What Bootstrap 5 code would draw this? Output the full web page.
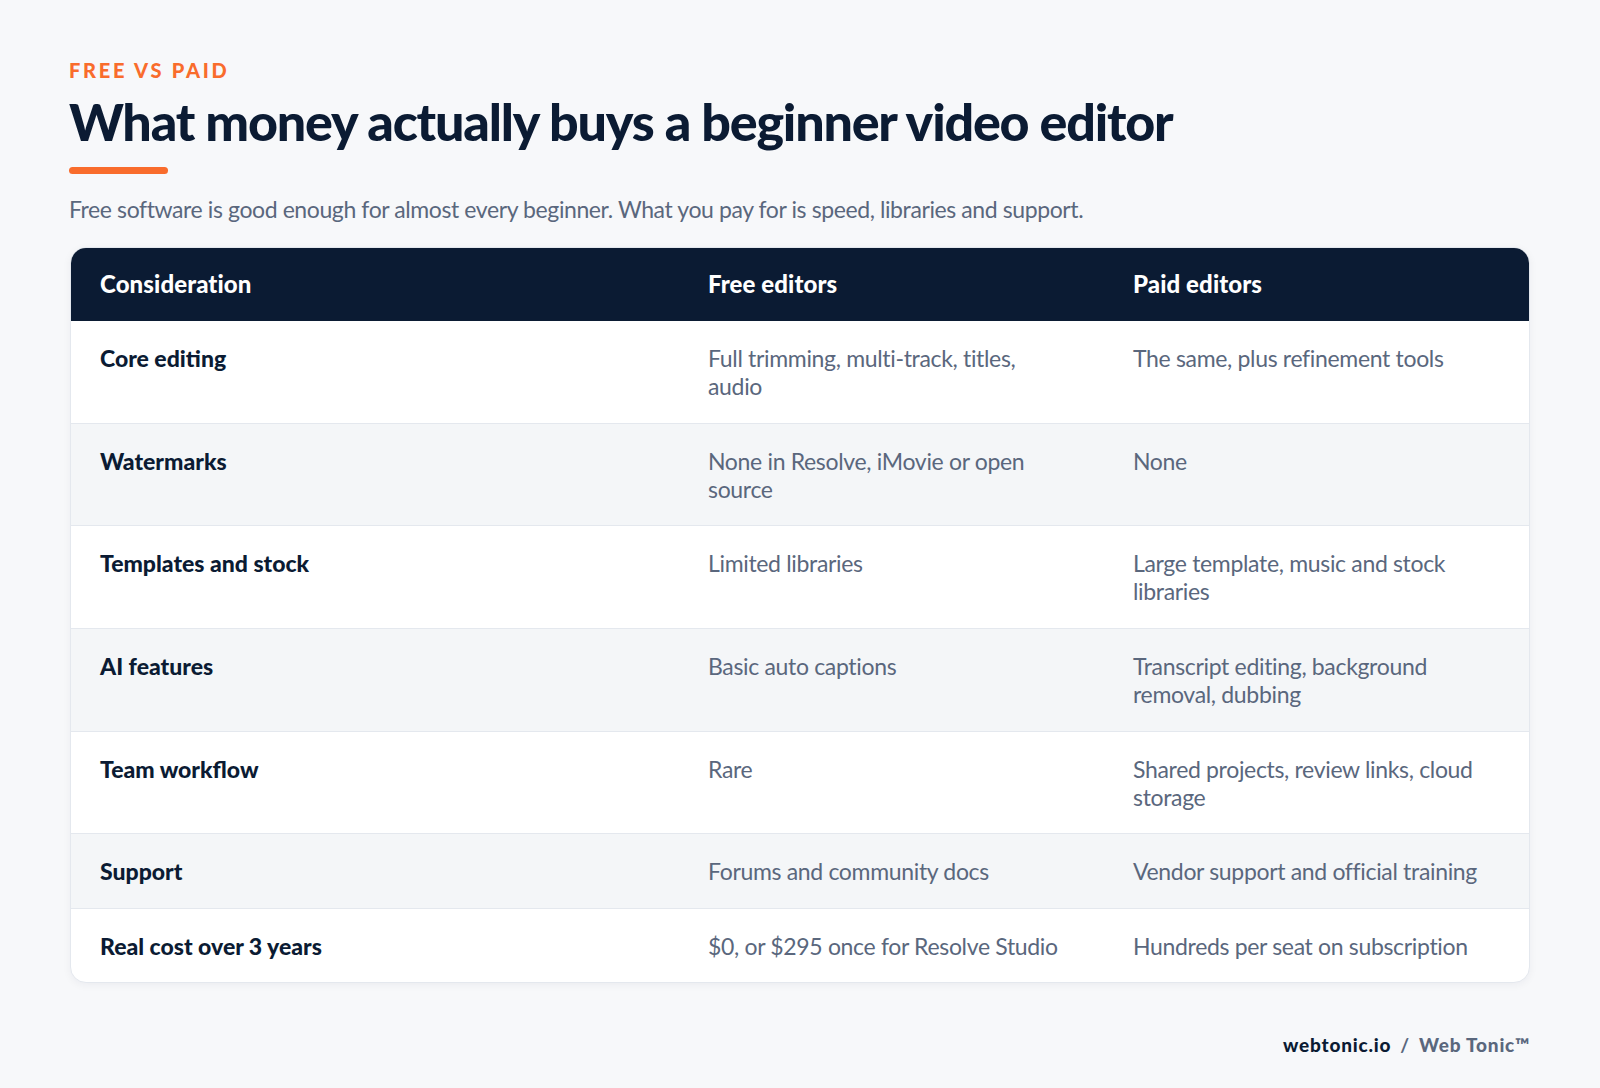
<!DOCTYPE html>
<html lang="en">
<head>
  <title>Free vs paid</title>
  <meta charset="utf-8">
  <meta name="viewport" content="width=device-width, initial-scale=1">
  <link href="https://cdn.jsdelivr.net/npm/bootstrap@5.3.1/dist/css/bootstrap.min.css" rel="stylesheet">
  <script src="https://cdn.jsdelivr.net/npm/bootstrap@5.3.1/dist/js/bootstrap.bundle.min.js"></script>
  <style>
    html, body { height: 100%; }
    body { background: #f7f8fa; font-family: Lato, "Liberation Sans", sans-serif; color: #0b1b33; }
    .slide { width: 1600px; height: 1088px; padding: 59px 70px 0 69px; }
    .kicker { font-size: 20px; font-weight: 900; letter-spacing: 2.75px; color: #f96c2c; line-height: 22px; }
    .headline { font-size: 52px; font-weight: 900; letter-spacing: -1.2px; line-height: 62px; margin: 9px 0 0; color: #0b1b33; }
    .rule { width: 99px; height: 7px; border-radius: 4px; background: #f96c2c; margin-top: 15px; }
    .intro { font-size: 23px; letter-spacing: -.4px; color: #5a677d; line-height: 30px; margin: 20px 0 23px; }
    .cmp-card { margin-left: 1px; border: 1px solid #e4e8ee; border-radius: 16px; overflow: hidden; background: #fff; box-shadow: 0 2px 8px rgba(11,27,51,.05); }
    .cmp-table { margin: 0; table-layout: fixed; width: 100%; font-size: 23px; line-height: 28px; letter-spacing: -.33px; }
    .cmp-table th, .cmp-table td { padding: 23px 29px 22.7px; border-bottom: 1px solid #e4e8ee; vertical-align: top; font-weight: 400; color: #5a677d; background: transparent; box-shadow: none; }
    .cmp-table thead th { background: #0b1b33; color: #fff; font-size: 24px; font-weight: 900; letter-spacing: .1px; padding: 22px 29px 23px; border-bottom: 0; }
    .cmp-table tbody th { color: #0b1b33; font-weight: 900; letter-spacing: 0; }
    .cmp-table tbody tr:nth-child(even) { background: #f4f6f8; }
    .cmp-table tbody tr:last-child th, .cmp-table tbody tr:last-child td { padding-bottom: 22px; border-bottom: 0; }
    .col-a { width: 608px; }
    .col-b { width: 425px; }
    .brand { font-size: 19px; font-weight: 900; letter-spacing: .8px; margin-top: 48px; }
    .brand-sep { margin: 0 9px; color: #5a677d; font-weight: 700; }
    .brand-name { color: #5a677d; }
  </style>
</head>
<body>

<div class="slide">
  <div class="kicker text-uppercase">Free vs paid</div>
  <h1 class="headline">What money actually buys a beginner video editor</h1>
  <div class="rule"></div>
  <p class="intro">Free software is good enough for almost every beginner. What you pay for is speed, libraries and support.</p>

  <div class="cmp-card">
    <table class="table cmp-table">
      <colgroup><col class="col-a"><col class="col-b"><col></colgroup>
      <thead>
        <tr><th>Consideration</th><th>Free editors</th><th>Paid editors</th></tr>
      </thead>
      <tbody>
        <tr><th>Core editing</th><td>Full trimming, multi-track, titles, audio</td><td>The same, plus refinement tools</td></tr>
        <tr><th>Watermarks</th><td>None in Resolve, iMovie or open source</td><td>None</td></tr>
        <tr><th>Templates and stock</th><td>Limited libraries</td><td>Large template, music and stock libraries</td></tr>
        <tr><th>AI features</th><td>Basic auto captions</td><td>Transcript editing, background removal, dubbing</td></tr>
        <tr><th>Team workflow</th><td>Rare</td><td>Shared projects, review links, cloud storage</td></tr>
        <tr><th>Support</th><td>Forums and community docs</td><td>Vendor support and official training</td></tr>
        <tr><th>Real cost over 3 years</th><td>$0, or $295 once for Resolve Studio</td><td>Hundreds per seat on subscription</td></tr>
      </tbody>
    </table>
  </div>

  <div class="brand text-end">webtonic.io<span class="brand-sep">/</span><span class="brand-name">Web Tonic™</span></div>
</div>

</body>
</html>
